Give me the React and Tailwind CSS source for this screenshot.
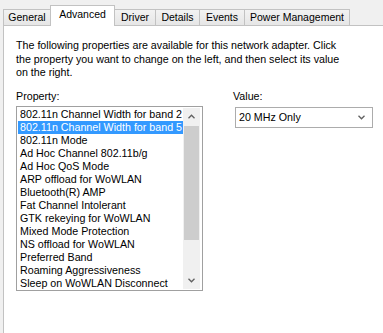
const tabs = [
  { label: 'General', w: 'w-[48px]' },
  { label: 'Advanced', w: 'w-[65px]', active: true },
  { label: 'Driver', w: 'w-[42px]' },
  { label: 'Details', w: 'w-[45px]' },
  { label: 'Events', w: 'w-[46px]' },
  { label: 'Power Management', w: 'w-[106px]' },
]

const properties = [
  '802.11n Channel Width for band 2',
  '802.11n Channel Width for band 5',
  '802.11n Mode',
  'Ad Hoc Channel 802.11b/g',
  'Ad Hoc QoS Mode',
  'ARP offload for WoWLAN',
  'Bluetooth(R) AMP',
  'Fat Channel Intolerant',
  'GTK rekeying for WoWLAN',
  'Mixed Mode Protection',
  'NS offload for WoWLAN',
  'Preferred Band',
  'Roaming Aggressiveness',
  'Sleep on WoWLAN Disconnect',
]

function Chevron({ up = false, className = '' }) {
  return (
    <svg width="7" height="5" viewBox="0 0 7 5" className={className}>
      <path
        d={up ? 'M0.5 4.2 L3.5 1.2 L6.5 4.2' : 'M0.5 0.8 L3.5 3.8 L6.5 0.8'}
        fill="none"
        stroke="currentColor"
        strokeWidth="1.3"
      />
    </svg>
  )
}

export default function App() {
  const selected = 1

  return (
    <div className="h-[333px] w-[383px] overflow-hidden bg-[#f0f0f0] font-['Liberation_Sans',Arial,sans-serif] text-[10.7px] text-black">
      <div className="flex h-[25px] items-end pl-[3px]">
        {tabs.map((t, i) => (
          <div
            key={t.label}
            className={`${t.w} ${i > 0 ? '-ml-px' : ''} flex justify-center border-x border-t border-[#c2c2c2] ${
              t.active
                ? 'relative z-10 -mb-px h-[21px] bg-white pt-[2px]'
                : 'h-[16px] bg-gradient-to-b from-[#f2f2f2] to-[#e6e6e6] pt-[1px]'
            }`}
          >
            <span className="whitespace-nowrap text-[10.5px] leading-[13px]">{t.label}</span>
          </div>
        ))}
      </div>

      <div className="ml-[3px] h-[310px] border-l border-t border-[#c2c2c2] bg-white pl-[12px] pt-[13px]">
        <p className="w-[328px] leading-[13.5px]">
          The following properties are available for this network adapter. Click the property you want to change on the
          left, and then select its value on the right.
        </p>

        <div className="mt-[10px] flex">
          <div className="w-[187px]">
            <div className="leading-[13px]">Property:</div>
            <div className="mt-[3px] flex h-[185px] border border-[#a0a0a0] p-px">
              <div className="flex-1 overflow-hidden">
                {properties.map((p, i) => (
                  <div
                    key={p}
                    className={`h-[13px] whitespace-nowrap pl-[2px] leading-[13px] ${
                      i === selected ? 'bg-[#3399ff] text-white' : ''
                    }`}
                  >
                    {p}
                  </div>
                ))}
              </div>
              <div className="mr-px flex w-[17px] flex-col bg-[#f0f0f0]">
                <div className="flex h-[18px] items-center justify-center text-[#606060]">
                  <Chevron up />
                </div>
                <div className="mx-px h-[114px] bg-[#cdcdcd]" />
                <div className="flex-1" />
                <div className="flex h-[17px] items-center justify-center text-[#606060]">
                  <Chevron />
                </div>
              </div>
            </div>
          </div>

          <div className="ml-[30px]">
            <div className="leading-[13px]">Value:</div>
            <div className="ml-[2px] mt-[4px] flex h-[21px] w-[138px] items-center justify-between border border-[#acacac] bg-white pl-[3px] pr-[7px]">
              <span>20 MHz Only</span>
              <Chevron className="text-[#606060]" />
            </div>
          </div>
        </div>
      </div>
    </div>
  )
}
